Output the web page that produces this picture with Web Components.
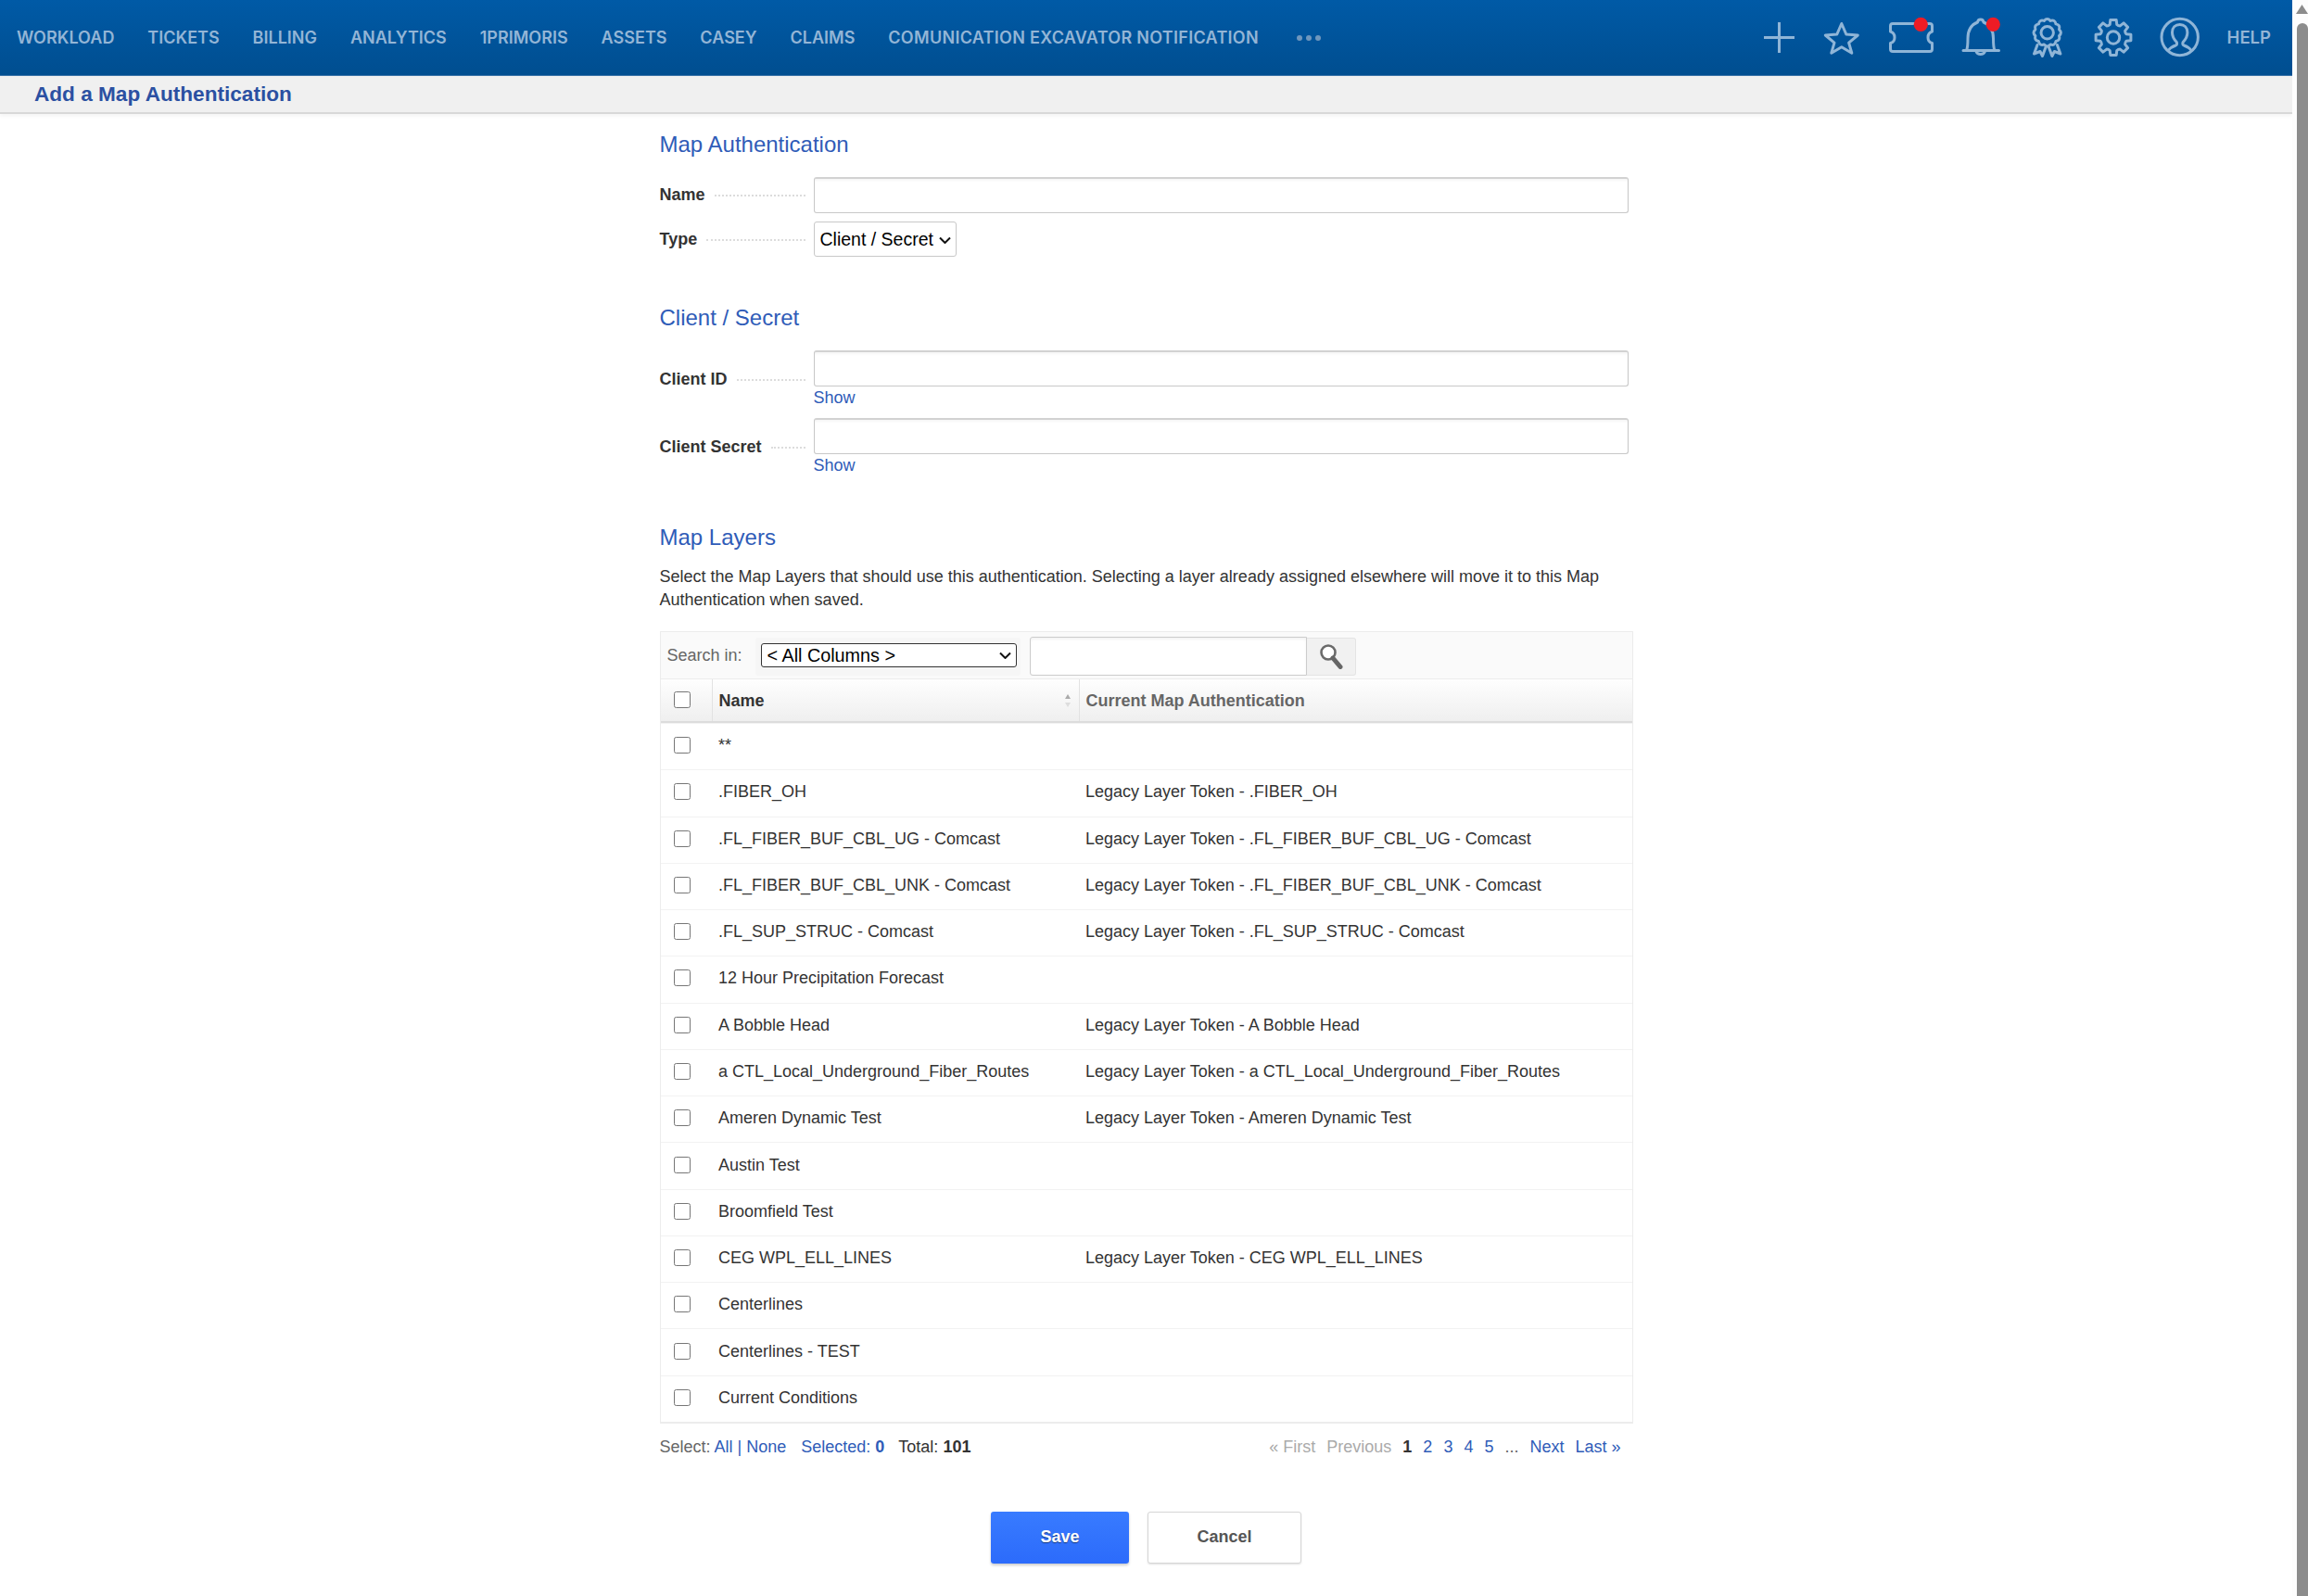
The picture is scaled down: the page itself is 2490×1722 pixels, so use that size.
<!DOCTYPE html>
<html lang="en"><head><meta charset="utf-8"><title>Add a Map Authentication</title>
<style>
html,body{margin:0;padding:0;height:1722px;overflow:hidden;background:#fff}
body{font-family:"Liberation Sans",Arial,sans-serif;font-size:18px;color:#333}
</style></head><body>
<app-shell>
<top-nav></top-nav>
<title-bar>Add a Map Authentication</title-bar>
<form-column>
  <section-head style="--top:14px">Map Authentication</section-head>
  <form-row label="Name" field="text"></form-row>
  <form-row label="Type" field="select"></form-row>
  <section-head style="--top:47px;--pb:2px">Client / Secret</section-head>
  <form-row label="Client ID" field="secret"></form-row>
  <form-row label="Client Secret" field="secret"></form-row>
  <section-head style="--top:51px">Map Layers</section-head>
  <p-note>Select the Map Layers that should use this authentication. Selecting a layer already assigned elsewhere will move it to this Map Authentication when saved.</p-note>
  <layer-grid></layer-grid>
  <grid-foot></grid-foot>
  <form-actions></form-actions>
</form-column>
</app-shell>
<script>
function def(name, css, html){
  customElements.define(name, class extends HTMLElement{
    constructor(){super();const s=this.attachShadow({mode:'open'});
      s.innerHTML='<style>'+css+'</style>'+(typeof html==='function'?html(this):html);}
  });
}
const ic='fill="none" stroke="#8fb5d7" stroke-width="3" stroke-linejoin="round" stroke-linecap="round"';
const chev="url(\"data:image/svg+xml,%3Csvg xmlns='http://www.w3.org/2000/svg' width='13' height='8'%3E%3Cpath d='M1 1.500l5.500 5.500 5.500-5.500' fill='none' stroke='%23111' stroke-width='2'/%3E%3C/svg%3E\")";
function gearPath(cx,cy){
  let d='';const pt=(r,a)=>{const t=a*Math.PI/180;return (cx+r*Math.sin(t)).toFixed(1)+' '+(cy-r*Math.cos(t)).toFixed(1)};
  for(let i=0;i<8;i++){const a=i*45;
    d+=(i?'L':'M')+pt(14.5,a-15)+'L'+pt(19.2,a-9.5)+'L'+pt(19.2,a+9.5)+'L'+pt(14.5,a+15);
    d+='Q'+pt(13.6,a+22.5)+' '+pt(14.5,a+30);
  }
  return d+'Z';
}
function scallop(cx,cy){
  let d='';const pt=(r,a)=>{const t=a*Math.PI/180;return (cx+r*Math.sin(t)).toFixed(1)+' '+(cy-r*Math.cos(t)).toFixed(1)};
  for(let i=0;i<12;i++){const a=i*30;
    d+=(i?'':'M'+pt(13.2,a-15))+'Q'+pt(16.6,a)+' '+pt(13.2,a+15);
  }
  return d+'Z';
}
def('app-shell',`:host{display:grid;grid-template-columns:2473px 17px;height:1722px;overflow:hidden}
 .main{min-width:0}.bar{background:#fdfdfd;position:relative}
 .thumb{position:absolute;left:5px;right:0;top:25px;bottom:0;background:#8c8c8c;border-radius:6px 6px 0 0}
 svg{position:absolute;left:4px;top:4px}`,
 `<div class="main"><slot></slot></div><div class="bar"><svg width="13" height="12"><path d="M6.500 1 13 11H0z" fill="#8c8c8c"/></svg><div class="thumb"></div></div>`);
def('top-nav',`:host{display:flex;align-items:center;height:82px;box-sizing:border-box;padding:0 23px 0 18px;
  background:linear-gradient(#005aa6,#004e90);border-bottom:1px solid #3a73a8;color:#93b5d6;font:600 18px Inter,sans-serif}
 nav{display:flex;gap:35.800px;align-items:center;letter-spacing:.03px}
 .long{letter-spacing:.3px}
 .dots{display:flex;gap:4px;margin-left:5px}.dots i{width:6px;height:6px;border-radius:50%;background:#6f97bd}
 .icons{margin-left:auto;display:flex;align-items:center;height:81px}
 svg{display:block;overflow:visible}
 .help{margin-left:23px;font-size:18.500px;position:relative;top:-1px}`,
 `<nav><span>WORKLOAD</span><span>TICKETS</span><span>BILLING</span><span>ANALYTICS</span><span>1PRIMORIS</span><span>ASSETS</span><span>CASEY</span><span>CLAIMS</span><span class="long">COMUNICATION EXCAVATOR NOTIFICATION</span><span class="dots"><i></i><i></i><i></i></span></nav>
 <div class="icons">
 <svg width="480" height="81" viewBox="1900 0 480 81" ${ic}>
  <path d="M1919.500 24V57M1903 40.500H1936" stroke-linecap="butt"/>
  <path d="M1986.800 25.500l5 11.500 12.500 1-9.700 8.200 3.200 11-11-6.500-11 6.500 3.200-11-9.700-8.200 12.500-1z"/>
  <path d="M2042 25.500H2082a2.500 2.500 0 0 1 2.500 2.500V34q-4.500 1.500-4.500 6.500t4.500 6V53a2.500 2.500 0 0 1-2.500 2.500H2042a2.500 2.500 0 0 1-2.500-2.500V46.500q4.500-1 4.500-6t-4.500-6.500V28a2.500 2.500 0 0 1 2.500-2.500z"/>
  <circle cx="2072.300" cy="26.300" r="7.600" fill="#ee1c25" stroke="none"/>
  <path d="M2118 54.500H2156.500M2121.500 54.500c1.500-3 1.500-7 1.500-13 0-9 4-15 10.500-17.500 .5-4 6-4 6.500 0 6.500 2.500 10.500 8.500 10.500 17.500 0 6 0 10 1.500 13M2132 55.500a5 4.500 0 0 0 9.500 0"/>
  <circle cx="2150.300" cy="26.300" r="7.600" fill="#ee1c25" stroke="none"/>
  <path d="${scallop(2208.7,35.2)}"/>
  <circle cx="2208.700" cy="35.200" r="6.700"/>
  <path d="M2198 48.500l-3.500 9.500 6.500-2.500 2.500 5 3.500-9.500M2219.400 48.500l3.500 9.500-6.500-2.500-2.500 5-3.500-9.500"/>
  <path d="${gearPath(2280,40.5)}"/>
  <circle cx="2280" cy="40.500" r="6.700"/>
  <circle cx="2351.700" cy="40" r="19.700"/>
  <path d="M2339.300 54.500c2.500-3.500 5-4.500 8-5.500 1.500-.7 1.500-2 1-3.500-3-3-4.800-6.500-4.800-10.500 0-5 3.300-8.500 8.200-8.500s8.200 3.500 8.200 8.500c0 4-1.800 7.500-4.800 10.500-.5 1.500-.5 2.800 1 3.500 3 1 5.500 2 8 5.500"/>
 </svg>
 <span class="help">HELP</span></div>`);
def('title-bar',`:host{display:block;height:41px;box-sizing:border-box;background:#f0f0f0;border-bottom:2px solid #d8d8d8;box-shadow:0 2px 4px rgba(0,0,0,.05);
 padding-left:37px;font:700 22.600px/40px "Liberation Sans",Arial,sans-serif;color:#2b50a2}`,`<slot></slot>`);
def('form-column',`:host{display:block;width:1050px;margin:0 auto}`,`<slot></slot>`);
def('section-head',`:host{display:block;margin-top:var(--top,0);padding-bottom:var(--pb,0);font:400 24px/38px "Liberation Sans",Arial,sans-serif;color:#2f5cb8}`,`<slot></slot>`);
def('form-row',`:host{display:grid;grid-template-columns:166px 1fr;font-size:18px;color:#333;margin-top:9px}
 :host([field=text]){margin-top:16px}
 :host([field=secret]){margin-top:14px;height:59px}
 .l{display:flex;align-items:center;height:38px;font-weight:700;gap:10px;padding-right:9px}
 .l i{flex:1;border-bottom:2px dotted #dcdcdc;height:0;margin-top:2px}
 input{display:block;box-sizing:border-box;width:879px;height:39px;border:1px solid #c8c8c8;border-top:2px solid #d2d2d2;border-radius:3px;margin:0;background:#fff;box-shadow:inset 0 2px 3px rgba(0,0,0,.04)}
 select{display:block;appearance:none;height:38px;width:154px;font:19.500px "Liberation Sans",Arial,sans-serif;color:#000;background:#fff ${chev} no-repeat 134px 15px;border:1px solid #c8c8c8;border-radius:3px;margin:0;padding:0 0 0 6px}
 a{display:block;color:#2f5cb8;font-size:18px;line-height:22px;margin-top:1px}
 :host([field=secret]) .l{height:59px;padding-top:3px;box-sizing:border-box}`,
 el=>{const f=el.getAttribute('field');const lab=el.getAttribute('label');
  const c=f==='select'?'<select><option>Client / Secret</option></select>':f==='secret'?'<input type="text"><a>Show</a>':'<input type="text">';
  return `<div class="l"><span>${lab}</span><i></i></div><div>${c}</div>`;});
def('p-note',`:host{display:block;font-size:18px;line-height:25px;color:#333;margin-top:10.500px;width:1030px}`,`<slot></slot>`);
const rows=[["**",""],[".FIBER_OH","Legacy Layer Token - .FIBER_OH"],[".FL_FIBER_BUF_CBL_UG - Comcast","Legacy Layer Token - .FL_FIBER_BUF_CBL_UG - Comcast"],[".FL_FIBER_BUF_CBL_UNK - Comcast","Legacy Layer Token - .FL_FIBER_BUF_CBL_UNK - Comcast"],[".FL_SUP_STRUC - Comcast","Legacy Layer Token - .FL_SUP_STRUC - Comcast"],["12 Hour Precipitation Forecast",""],["A Bobble Head","Legacy Layer Token - A Bobble Head"],["a CTL_Local_Underground_Fiber_Routes","Legacy Layer Token - a CTL_Local_Underground_Fiber_Routes"],["Ameren Dynamic Test","Legacy Layer Token - Ameren Dynamic Test"],["Austin Test",""],["Broomfield Test",""],["CEG WPL_ELL_LINES","Legacy Layer Token - CEG WPL_ELL_LINES"],["Centerlines",""],["Centerlines - TEST",""],["Current Conditions",""]];
def('layer-grid',`:host{display:block;margin-top:21.500px;border:1px solid #ececec;border-bottom:2px solid #ececec;box-sizing:border-box;width:1050px;color:#333;font-size:18px}
 .bar{display:flex;align-items:center;height:51px;box-sizing:border-box;background:#fafafa;border-bottom:1px solid #ececec;padding:2px 0 0 7px}
 .bar span{color:#666;width:95px;margin-top:-2px}
 .sw{display:flex;align-items:center;width:286px;height:41px;box-sizing:border-box;background:#f6f6f6;border-radius:3px;padding-left:6px}
 .sw select{appearance:none;width:276px;height:26px;margin:-3px 0 0;font:19.800px "Liberation Sans",Arial,sans-serif;color:#000;background:#fff ${chev} no-repeat 256px 8px;border:1px solid #333;border-radius:3px;padding:0 0 0 6px}
 .q{box-sizing:border-box;width:299px;height:42px;margin-left:10px;border:1px solid #ccc;border-radius:3px 0 0 3px;background:#fff;padding:0;box-shadow:inset 0 2px 3px rgba(0,0,0,.05)}
 .b{display:flex;align-items:center;justify-content:center;width:53px;height:41px;box-sizing:border-box;background:#f1f1f1;border:1px solid #e4e4e4;border-left:0;border-radius:0 3px 3px 0}
 .r{display:grid;grid-template-columns:55px 396px 1fr;height:50.270px;box-sizing:border-box;border-top:1px solid #f2f2f2;align-items:center}
 .r>div{padding-left:7.500px;padding-bottom:2px;white-space:nowrap}
 .r>div:first-child{padding:0 0 3px 14px;display:flex}
 .h{height:47px;border-top:0;border-bottom:2px solid #dcdcdc;background:linear-gradient(#fefefe,#efefef);font-weight:700;align-items:stretch;color:#666}
 .h>div{display:flex;align-items:center;border-left:1px solid #e2e2e2;position:relative;padding:2px 0 0 7px}
 .h>div:first-child{border-left:0;padding:0 0 1px 14px;align-items:center}
 .h .n{color:#333}
 .h svg{position:absolute;right:8px;top:15px}
 input[type=checkbox]{width:18px;height:18px;margin:0}`,
 ()=>`<div class="bar"><span>Search in:</span><div class="sw"><select><option>&lt; All Columns &gt;</option></select></div><input class="q" type="text"><div class="b"><svg width="26" height="28" viewBox="0 0 26 28"><circle cx="10" cy="10" r="7.500" fill="#fff" stroke="#6a6a6a" stroke-width="2.600"/><path d="M15 16l8 9.500" stroke="#666" stroke-width="5" stroke-linecap="round"/></svg></div></div>
 <div class="r h"><div><input type="checkbox"></div><div class="n">Name<svg width="8" height="16"><path d="M4 1l3 5H1z" fill="#aaa"/><path d="M4 15l3-5H1z" fill="#ddd"/></svg></div><div>Current Map Authentication</div></div>
 ${rows.map(r=>`<div class="r"><div><input type="checkbox"></div><div>${r[0]}</div><div>${r[1]}</div></div>`).join('')}`);
def('grid-foot',`:host{display:flex;justify-content:space-between;margin-top:13px;font-size:18px;line-height:24px;color:#666;padding-right:13px}
 a{color:#2f5cb8}b{color:#333}.d{color:#aaa}.k{color:#333;margin-left:-1px}
 .g{display:flex;gap:16px}
 .p{display:flex;gap:12px}`,
 `<div class="g"><span>Select: <a>All | None</a></span><a>Selected: <b style="color:#2f5cb8">0</b></a><span class="k">Total: <b>101</b></span></div>
 <div class="p"><span class="d">« First</span><span class="d">Previous</span><b>1</b><a>2</a><a>3</a><a>4</a><a>5</a><span>...</span><a>Next</a><a>Last »</a></div>`);
def('form-actions',`:host{display:flex;justify-content:center;gap:20px;margin-top:58px}
 button{box-sizing:border-box;height:56px;border-radius:3px;font:700 18px "Liberation Sans",Arial,sans-serif;margin:0;padding:0}
 .s{width:149px;background:linear-gradient(#387bff,#2c6bfb);color:#fff;border:0;box-shadow:0 2px 3px rgba(0,0,0,.2);text-shadow:0 1px 1px rgba(0,0,0,.5)}
 .c{width:166px;background:#fff;color:#555;border:1px solid #d6d6d6;box-shadow:0 1px 2px rgba(0,0,0,.12)}`,
 `<button class="s">Save</button><button class="c">Cancel</button>`);
</script>
</body></html>
